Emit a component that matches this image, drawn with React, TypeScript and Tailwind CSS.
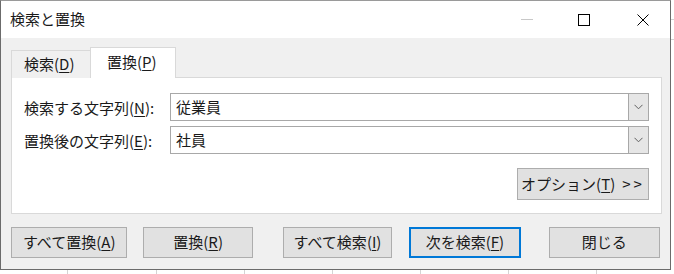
import React from 'react';

const font = { fontFamily: '"Noto Sans CJK JP", "Noto Sans", sans-serif' };

// underlined access key, e.g. (D)
const Key: React.FC<{ k: string }> = ({ k }) => (
  <span>
    (<span className="underline underline-offset-2 decoration-1">{k}</span>)
  </span>
);

const Chevron = () => (
  <svg width="9" height="6" viewBox="0 0 9 6" fill="none">
    <path d="M0.5 0.8 L4.5 4.8 L8.5 0.8" stroke="#606060" strokeWidth="1" />
  </svg>
);

const ComboRow: React.FC<{ label: string; k: string; value: string }> = ({ label, k, value }) => (
  <div className="flex items-center h-[28px]">
    <div className="w-[146px] text-[15px] text-[#1a1a1a] pt-[2px]">
      {label}
      <Key k={k} />:
    </div>
    <div className="flex-1 h-[28px] flex border border-[#a8a8a8] bg-white">
      <div className="flex-1 pl-[5px] text-[15px] text-[#1a1a1a] flex items-center">{value}</div>
      <div className="w-[20px] bg-[#e6e6e6] border-l border-[#a8a8a8] flex items-center justify-center">
        <Chevron />
      </div>
    </div>
  </div>
);

const Btn: React.FC<{ w: string; primary?: boolean; children: React.ReactNode }> = ({ w, primary, children }) => (
  <div
    className={`${w} h-[31px] flex items-center justify-center text-[15px] text-[#1a1a1a] bg-[#e1e1e1] ${
      primary ? 'border-2 border-[#0078d7]' : 'border border-[#adadad]'
    }`}
  >
    {children}
  </div>
);

export default function App() {
  return (
    <div className="w-[674px] h-[274px] bg-white overflow-hidden flex flex-col" style={font}>
      <div className="flex">
        <div className="w-[671px] h-[270px] flex flex-col border-x border-b border-t border-[#6b6b6b] border-t-[#9a9a9a]">
          {/* title bar */}
          <div className="h-[37px] bg-white flex items-center">
            <div className="pl-[9px] text-[15px] text-[#1a1a1a] flex-1">検索と置換</div>
            <div className="w-[12px] h-px bg-[#c8c8c8] mr-[45px]" />
            <div className="w-[12px] h-[12px] border border-black mr-[47px]" />
            <svg width="12" height="12" viewBox="0 0 12 12" className="mr-[21px]">
              <path d="M0.5 0.5 L11.5 11.5 M11.5 0.5 L0.5 11.5" stroke="#000" strokeWidth="1" />
            </svg>
          </div>

          {/* body */}
          <div className="flex-1 bg-[#f0f0f0] flex flex-col px-[10px]">
            {/* tabs */}
            <div className="flex items-end h-[40px] -mb-px relative z-10">
              <div className="w-[79px] h-[28px] border-l border-t border-[#d9d9d9] bg-[#f0f0f0] flex items-center pl-[12px] text-[15px] text-[#1a1a1a]">
                検索<Key k="D" />
              </div>
              <div className="w-[86px] h-[31px] border-x border-t border-[#d9d9d9] bg-white flex items-center pl-[16px] pb-[2px] text-[15px] text-[#1a1a1a]">
                置換<Key k="P" />
              </div>
            </div>

            {/* panel */}
            <div className="h-[137px] w-[651px] bg-white border border-[#d9d9d9] flex flex-col pl-[12px] pr-[12px] pt-[15px]">
              <div className="flex flex-col gap-[5px]">
                <ComboRow label="検索する文字列" k="N" value="従業員" />
                <ComboRow label="置換後の文字列" k="E" value="社員" />
              </div>
              <div className="flex justify-end mt-[14px]">
                <div className="w-[132px] h-[32px] bg-[#e1e1e1] border border-[#adadad] flex items-center justify-center text-[15px] text-[#1a1a1a]">
                  オプション<Key k="T" />
                  <span className="ml-[7px] tracking-[3px]">&gt;&gt;</span>
                </div>
              </div>
            </div>

            {/* buttons */}
            <div className="flex mt-[13px]">
              <Btn w="w-[117px]">
                すべて置換<Key k="A" />
              </Btn>
              <div className="w-[16px]" />
              <Btn w="w-[110px]">
                置換<Key k="R" />
              </Btn>
              <div className="w-[30px]" />
              <Btn w="w-[110px]">
                すべて検索<Key k="I" />
              </Btn>
              <div className="w-[17px]" />
              <Btn w="w-[112px]" primary>
                次を検索<Key k="F" />
              </Btn>
              <div className="w-[28px]" />
              <Btn w="w-[112px]">閉じる</Btn>
            </div>
          </div>
        </div>
        {/* spreadsheet strip on the right */}
        <div className="flex-1 flex flex-col">
          <div className="h-[20px] border-b border-[#d4d4d4]" />
          <div className="h-[20px] border-b border-[#d4d4d4]" />
        </div>
      </div>
      {/* spreadsheet grid below */}
      <div className="flex-1 flex">
        <div className="w-[68px] border-r border-[#d4d4d4]" />
        <div className="w-[89px] border-r border-[#d4d4d4]" />
        <div className="w-[88px] border-r border-[#d4d4d4]" />
        <div className="w-[88px] border-r border-[#d4d4d4]" />
        <div className="w-[88px] border-r border-[#d4d4d4]" />
        <div className="w-[88px] border-r border-[#d4d4d4]" />
        <div className="w-[88px] border-r border-[#d4d4d4]" />
      </div>
    </div>
  );
}
